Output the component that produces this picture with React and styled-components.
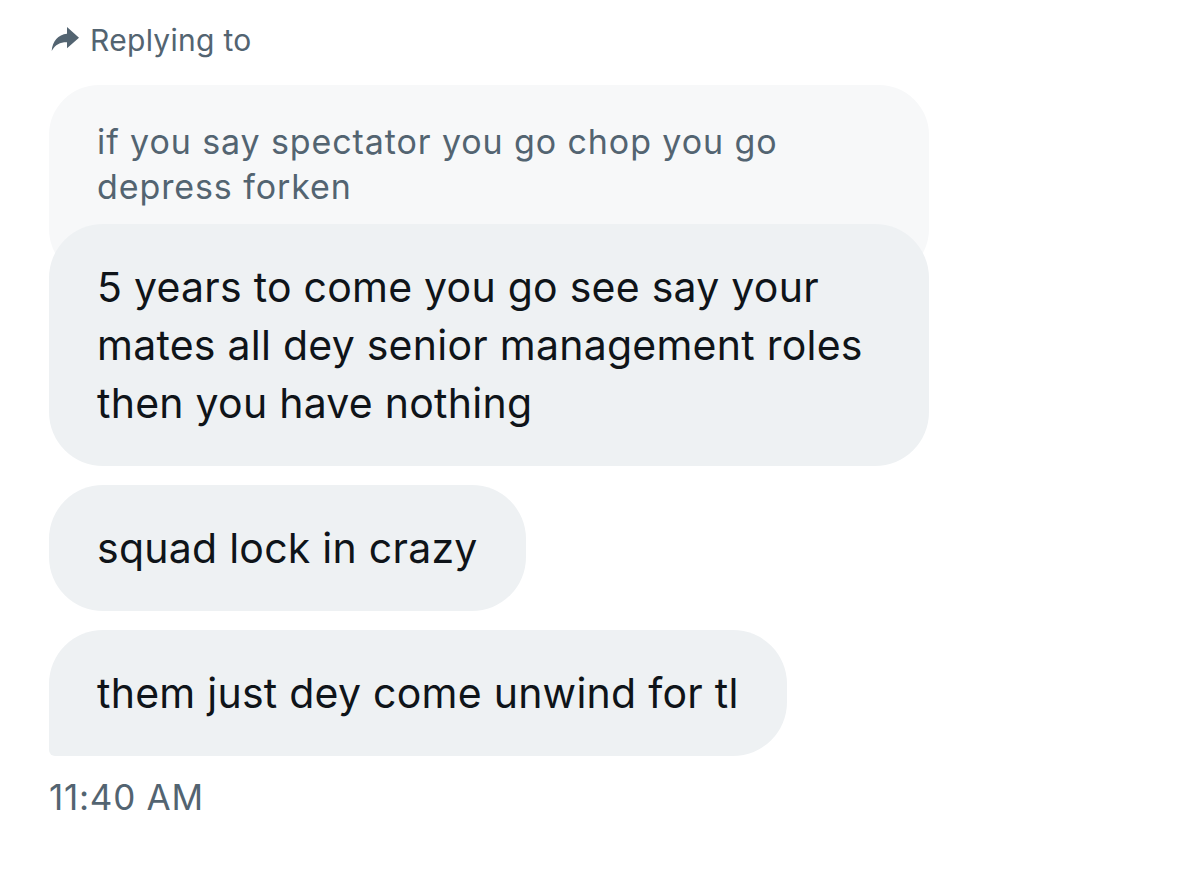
import React from "react";
import styled, { createGlobalStyle } from "styled-components";

const Global = createGlobalStyle`
  html, body { margin: 0; padding: 0; background: #ffffff; }
  body { font-family: Inter, "Noto Sans", "Liberation Sans", sans-serif; -webkit-font-smoothing: antialiased; }
`;

const Page = styled.div`
  width: 1199px;
  min-height: 872px;
  box-sizing: border-box;
  padding: 22px 0 0 49px;
  display: flex;
  flex-direction: column;
`;

const ReplyRow = styled.div`
  display: flex;
  align-items: center;
  gap: 9px;
  height: 36px;
  color: #536471;
  font-size: 30px;
  letter-spacing: 0.3px;
  margin-bottom: 27px;
`;

const Icon = styled.svg`
  width: 32px;
  height: 32px;
  fill: #536471;
  margin-top: -3px;
`;

const Thread = styled.div`
  display: flex;
  flex-direction: column;
  align-items: flex-start;
  gap: 19px;
`;

const Quote = styled.div`
  width: 880px;
  box-sizing: border-box;
  background: #f7f8f9;
  border-radius: 50px;
  padding: 34px 48px 70px;
  color: #536471;
  font-size: 34px;
  line-height: 45px;
  letter-spacing: 0.9px;
`;

const Bubble = styled.div`
  background: #eef1f3;
  border-radius: ${(p) => (p.$tail ? "54px 54px 54px 6px" : "54px")};
  box-sizing: border-box;
  padding: 34px 48px 34px;
  color: #0f1419;
  font-size: 41px;
  line-height: 58px;
  letter-spacing: 0.25px;
  width: ${(p) => (p.$w ? `${p.$w}px` : "auto")};
  margin-top: ${(p) => (p.$overlap ? "-74px" : "0")};
  white-space: ${(p) => (p.$w ? "normal" : "nowrap")};
`;

const Time = styled.div`
  margin-top: 21px;
  color: #536471;
  font-size: 35px;
  line-height: 40px;
  letter-spacing: 0.75px;
`;

export default function App() {
  return (
    <>
      <Global />
      <Page>
        <ReplyRow>
          <Icon viewBox="0 0 24 24">
            <path d="M13.5 3 L22.5 11 L13.5 19 V14.5 C8.5 14.4 5 16 2 21 C2.6 13.6 6.8 8.6 13.5 8 Z" />
          </Icon>
          Replying to
        </ReplyRow>
        <Thread>
          <Quote>
            if you say spectator you go chop you go
            <br />
            depress forken
          </Quote>
          <Bubble $w={880} $overlap>
            5 years to come you go see say your
            <br />
            mates all dey senior management roles
            <br />
            then you have nothing
          </Bubble>
          <Bubble>squad lock in crazy</Bubble>
          <Bubble $tail>them just dey come unwind for tl</Bubble>
        </Thread>
        <Time>11:40 AM</Time>
      </Page>
    </>
  );
}
